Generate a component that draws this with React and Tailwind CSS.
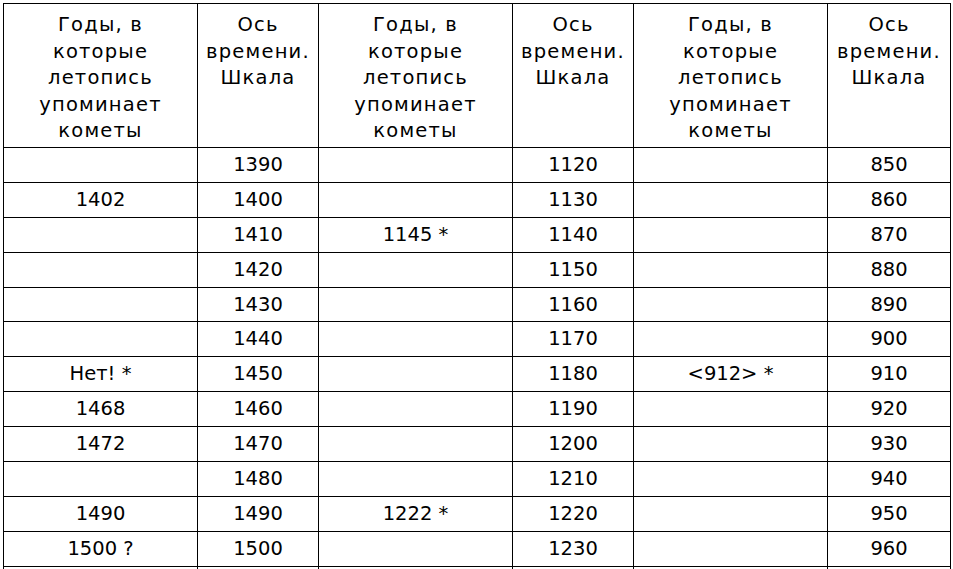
import React from 'react';

const rows = [
  ['', '1390', '', '1120', '', '850'],
  ['1402', '1400', '', '1130', '', '860'],
  ['', '1410', '1145 *', '1140', '', '870'],
  ['', '1420', '', '1150', '', '880'],
  ['', '1430', '', '1160', '', '890'],
  ['', '1440', '', '1170', '', '900'],
  ['Нет! *', '1450', '', '1180', '<912> *', '910'],
  ['1468', '1460', '', '1190', '', '920'],
  ['1472', '1470', '', '1200', '', '930'],
  ['', '1480', '', '1210', '', '940'],
  ['1490', '1490', '1222 *', '1220', '', '950'],
  ['1500 ?', '1500', '', '1230', '', '960'],
  ['', '', '', '', '', ''],
];

const cols = 'grid grid-cols-[193px_120px_193px_120px_193px_122px] gap-px';

function YearsHead() {
  return (
    <div className="bg-white pt-[8px] text-center leading-[26.6px] tracking-[1.2px]">
      Годы, в<br />которые<br />летопись<br />упоминает<br />кометы
    </div>
  );
}

function ScaleHead() {
  return (
    <div className="bg-white pt-[8px] text-center leading-[26.6px] tracking-[1.2px]">
      Ось<br />времени.<br />Шкала
    </div>
  );
}

export default function App() {
  return (
    <div className="h-[569px] w-[953px] overflow-hidden bg-white">
      <div
        className="ml-[3px] mt-[3px] grid w-max gap-px bg-black p-px text-[19.5px] text-black"
        style={{ fontFamily: '"DejaVu Sans", Verdana, sans-serif' }}
      >
        <div className={cols + ' h-[143px]'}>
          <YearsHead />
          <ScaleHead />
          <YearsHead />
          <ScaleHead />
          <YearsHead />
          <ScaleHead />
        </div>
        {rows.map((r, i) => (
          <div key={i} className={cols + (i === 4 ? ' h-[33px]' : ' h-[34px]')}>
            {r.map((c, j) => (
              <div key={j} className="flex items-center justify-center bg-white whitespace-pre">
                {c}
              </div>
            ))}
          </div>
        ))}
      </div>
    </div>
  );
}
